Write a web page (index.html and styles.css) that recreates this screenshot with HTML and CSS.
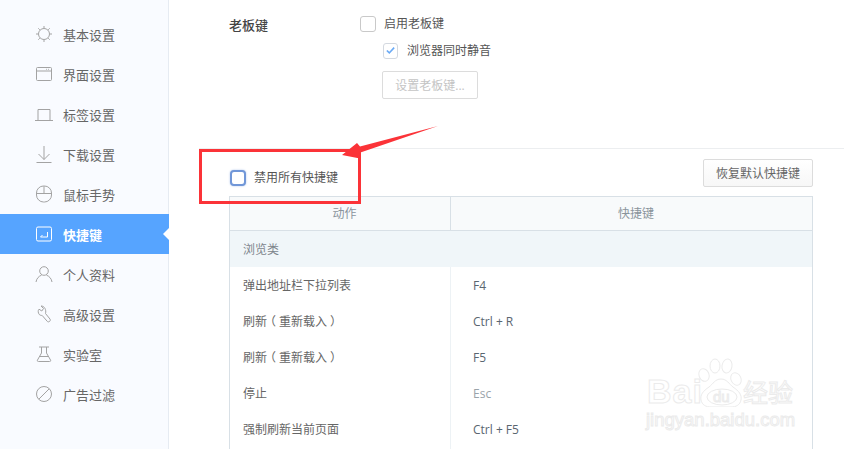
FILE: index.html
```html
<!DOCTYPE html>
<html lang="zh-CN">
<head>
<meta charset="utf-8">
<title>快捷键设置</title>
<link rel="stylesheet" href="styles.css">
</head>
<body>
<div class="app">
  <nav class="sidebar">
    <a class="nav-item"><svg class="ico" viewBox="0 0 18 18"><circle cx="9" cy="9" r="5.500"/><path d="M9 1v2M9 15v2M1 9h2M15 9h2M3.300 3.300l1.500 1.500M13.200 13.200l1.500 1.500M3.300 14.700l1.500-1.500M13.200 4.800l1.500-1.500"/></svg><span>基本设置</span></a>
    <a class="nav-item"><svg class="ico" viewBox="0 0 18 18"><rect x="1.500" y="2.500" width="15" height="13" rx="1"/><path d="M1.500 6h15M11 4.300h.8M13 4.300h.8"/></svg><span>界面设置</span></a>
    <a class="nav-item"><svg class="ico" viewBox="0 0 18 18"><path d="M0 15.500h18M3 15.500V4.500h12v11"/></svg><span>标签设置</span></a>
    <a class="nav-item"><svg class="ico" viewBox="0 0 18 18"><path d="M9 1v13.500M3.500 9L9 14.500 14.500 9M1.500 17.500h15"/></svg><span>下载设置</span></a>
    <a class="nav-item"><svg class="ico" viewBox="0 0 18 18"><rect x="1.500" y="1" width="15" height="16" rx="7"/><path d="M1.500 8.500h15M9 1v7.500"/></svg><span>鼠标手势</span></a>
    <a class="nav-item active"><svg class="ico" viewBox="0 0 18 18"><rect x="1.500" y="2" width="15" height="14" rx="1.500"/><path d="M12.500 7v5H5.500M7.500 10l-2 2"/></svg><span>快捷键</span></a>
    <a class="nav-item"><svg class="ico" viewBox="0 0 18 18"><circle cx="9" cy="6" r="4.300"/><path d="M1 17c.5-3.500 3-6 5.500-6.800M17 17c-.5-3.500-3-6-5.500-6.800"/></svg><span>个人资料</span></a>
    <a class="nav-item"><svg class="ico" viewBox="0 0 18 18"><path d="M6 1L8.500 3.500 6.800 6 4 4.200C2.800 5.500 3 8 4.300 9.500c1 .9 2 1 2.800.9l5.200 6c1.200 1.300 3.700-.3 2.800-2.200L10.500 8.500C11.500 5 9.500 .8 6 1z"/></svg><span>高级设置</span></a>
    <a class="nav-item"><svg class="ico" viewBox="0 0 18 18"><path d="M4 2h10M6.500 2v6L2.500 15c-.5 1 0 1.500 1 1.500h11c1 0 1.500-.5 1-1.500l-4-7V2M5 11.500h8"/></svg><span>实验室</span></a>
    <a class="nav-item"><svg class="ico" viewBox="0 0 18 18"><circle cx="9" cy="9" r="7.500"/><path d="M3.800 14.200L14.200 3.800"/></svg><span>广告过滤</span></a>
  </nav>

  <main class="content">
    <section class="boss">
      <div class="boss-label">老板键</div>
      <div class="boss-options">
        <label class="check-row"><span class="box"></span>启用老板键</label>
        <label class="check-row sub"><span class="box small"><svg viewBox="0 0 16 16"><path d="M3.500 8l3 3 6-6.500"/></svg></span>浏览器同时静音</label>
        <button class="btn disabled">设置老板键...</button>
      </div>
    </section>

    <section class="keys">
      <div class="keys-bar">
        <label class="check-row focus"><span class="box blue"></span>禁用所有快捷键</label>
        <button class="btn">恢复默认快捷键</button>
      </div>
      <div class="table">
        <div class="thead"><div>动作</div><div>快捷键</div></div>
        <div class="group">浏览类</div>
        <div class="row"><div>弹出地址栏下拉列表</div><div class="key">F4</div></div>
        <div class="row"><div>刷新<span class="paren">（</span>重新载入<span class="paren">）</span></div><div class="key">Ctrl + R</div></div>
        <div class="row"><div>刷新<span class="paren">（</span>重新载入<span class="paren">）</span></div><div class="key">F5</div></div>
        <div class="row"><div>停止</div><div class="key muted">Esc</div></div>
        <div class="row"><div>强制刷新当前页面</div><div class="key">Ctrl + F5</div></div>
      </div>
    </section>
  </main>
</div>

<div class="red-frame"></div>
<svg class="arrow" viewBox="0 0 110 40"><polygon points="108,1 30,21.500 27,18 12,30 30,33.500 29,28"/></svg>

<div class="watermark">
  <svg class="paw" viewBox="0 0 50 50">
    <ellipse cx="8" cy="18" rx="5" ry="6.500" transform="rotate(-20 8 18)"/>
    <ellipse cx="19" cy="9" rx="5" ry="7"/>
    <ellipse cx="31" cy="9" rx="5" ry="7" transform="rotate(10 31 9)"/>
    <ellipse cx="40" cy="22" rx="5" ry="6.500" transform="rotate(-25 40 22)"/>
    <path d="M25 22c6 0 8 5 12 8 6 4 9 8 8 13-1 5-5 7-10 7H15c-5 0-9-2-10-7-1-5 2-9 8-13 4-3 6-8 12-8z"/>
    <ellipse cx="26" cy="40" rx="15" ry="8"/>
  </svg>
  <span class="wm-bai">Bai</span>
  <span class="wm-du">du</span>
  <span class="wm-cn">经验</span>
  <span class="wm-url">jingyan.baidu.com</span>
</div>
</body>
</html>
```
FILE: styles.css
```css
* { box-sizing: border-box; }
html, body { margin: 0; height: 100%; overflow: hidden; background: #fff; }
body {
  font-family: "Open Sans", "Noto Sans CJK SC", sans-serif;
  font-size: 12px;
  color: #555;
}
.app { display: flex; height: 449px; overflow: hidden; }

.sidebar {
  width: 169px;
  flex: none;
  padding-top: 14px;
  background: #f9fbff;
  border-right: 1px solid #e6ebf2;
}
.nav-item {
  position: relative;
  display: flex;
  align-items: center;
  height: 40px;
  margin-right: -1px;
  padding-left: 35px;
  font-size: 13px;
  color: #666;
}
.ico {
  width: 18px;
  height: 18px;
  margin-right: 10px;
  fill: none;
  stroke: #a3a3a3;
  stroke-width: 1;
}
.nav-item.active { background: #56a4ff; color: #fff; font-weight: 700; }
.nav-item.active .ico { stroke: #fff; }
.nav-item.active::after {
  content: "";
  position: absolute;
  right: 0;
  top: 14px;
  border: 6px solid transparent;
  border-left-width: 0;
  border-right-color: #fff;
}

.content { flex: 1; min-width: 0; padding-left: 30px; }
.boss {
  display: flex;
  height: 148px;
  padding: 16px 0 0 30px;
}
.boss-label {
  width: 131px;
  font-size: 13px;
  line-height: 18px;
  color: #444;
  font-weight: 500;
}
.boss-options { display: flex; flex-direction: column; align-items: flex-start; }
.check-row { display: flex; align-items: center; height: 16px; line-height: 16px; }
.box {
  width: 16px;
  height: 16px;
  margin-right: 8px;
  background: #fff;
  border: 1px solid #c9c9c9;
  border-radius: 3px;
  flex: none;
}
.box svg { display: block; fill: none; stroke: #6aaaf5; stroke-width: 2; }
.box.small { width: 15px; height: 16px; margin-right: 9px; border-color: #d4d9e0; }
.box.blue { border: 2px solid #7197d8; box-shadow: 0 0 2px rgba(113,151,216,.6); margin-right: 8px; border-radius: 4px; }
.sub { margin: 11px 0 12px 23px; }

.btn {
  height: 28px;
  padding: 0 12px;
  font: inherit;
  color: #666;
  background: linear-gradient(#fff, #f7f7f7);
  border: 1px solid #dcdcdc;
  border-radius: 2px;
}
.btn.disabled { margin-left: 22px; width: 96px; padding: 0; color: #c4c4c4; background: #fff; }

.keys { border-top: 1px solid #eceef0; padding: 10px 31px 0 30px; }
.keys-bar {
  display: flex;
  justify-content: space-between;
  align-items: flex-start;
  height: 28px;
  margin-bottom: 9px;
}
.focus { margin: 11px 0 0 1px; }
.table {
  border: 1px solid #d8e0e6;
  border-bottom: 0;
  height: 260px;
}
.thead, .row { display: grid; grid-template-columns: 221px 1fr; }
.thead {
  height: 34px;
  line-height: 33px;
  text-align: center;
  background: #f8fafb;
  color: #8a949c;
  border-bottom: 1px solid #d8e0e6;
}
.thead > div { padding-left: 9px; }
.thead > div:first-child { border-right: 1px solid #d8e0e6; }
.group {
  height: 36px;
  line-height: 38px;
  padding-left: 13px;
  background: #f0f6f9;
  color: #7d858c;
}
.row { height: 36px; line-height: 38px; color: #666; }
.row > div:first-child { padding-left: 13px; border-right: 1px solid #edf2f5; }
.paren { font-feature-settings: "halt"; padding: 0 3px; }
.key { padding-left: 22px; color: #5a6670; font-size: 12px; }
.key.muted { color: #9aa3aa; }

.red-frame {
  position: absolute;
  left: 199px;
  top: 149px;
  width: 162px;
  height: 55px;
  border: 3px solid #fb3338;
}
.arrow {
  position: absolute;
  left: 330px;
  top: 125px;
  width: 110px;
  height: 40px;
  fill: #fb3338;
}

.watermark { position: absolute; left: 640px; top: 355px; width: 165px; height: 80px; }
.watermark span {
  position: absolute;
  color: #fff;
  -webkit-text-stroke: 1px #ebebeb;
  font-family: "Liberation Sans", "Noto Sans CJK SC", sans-serif;
  white-space: nowrap;
}
.paw {
  position: absolute;
  left: 56px;
  top: 2px;
  width: 50px;
  height: 50px;
  fill: #fff;
  stroke: #ebebeb;
  stroke-width: 1;
}
.wm-bai { left: 7px; top: 18px; font-size: 34px; line-height: 36px; font-weight: 700; letter-spacing: 1px; }
.wm-du { left: 73px; top: 33px; font-size: 15px; line-height: 18px; }
.wm-cn { left: 103px; top: 24px; font-size: 25px; line-height: 28px; }
.wm-url { left: 6px; top: 55px; font-size: 18.500px; line-height: 20px; }
```
